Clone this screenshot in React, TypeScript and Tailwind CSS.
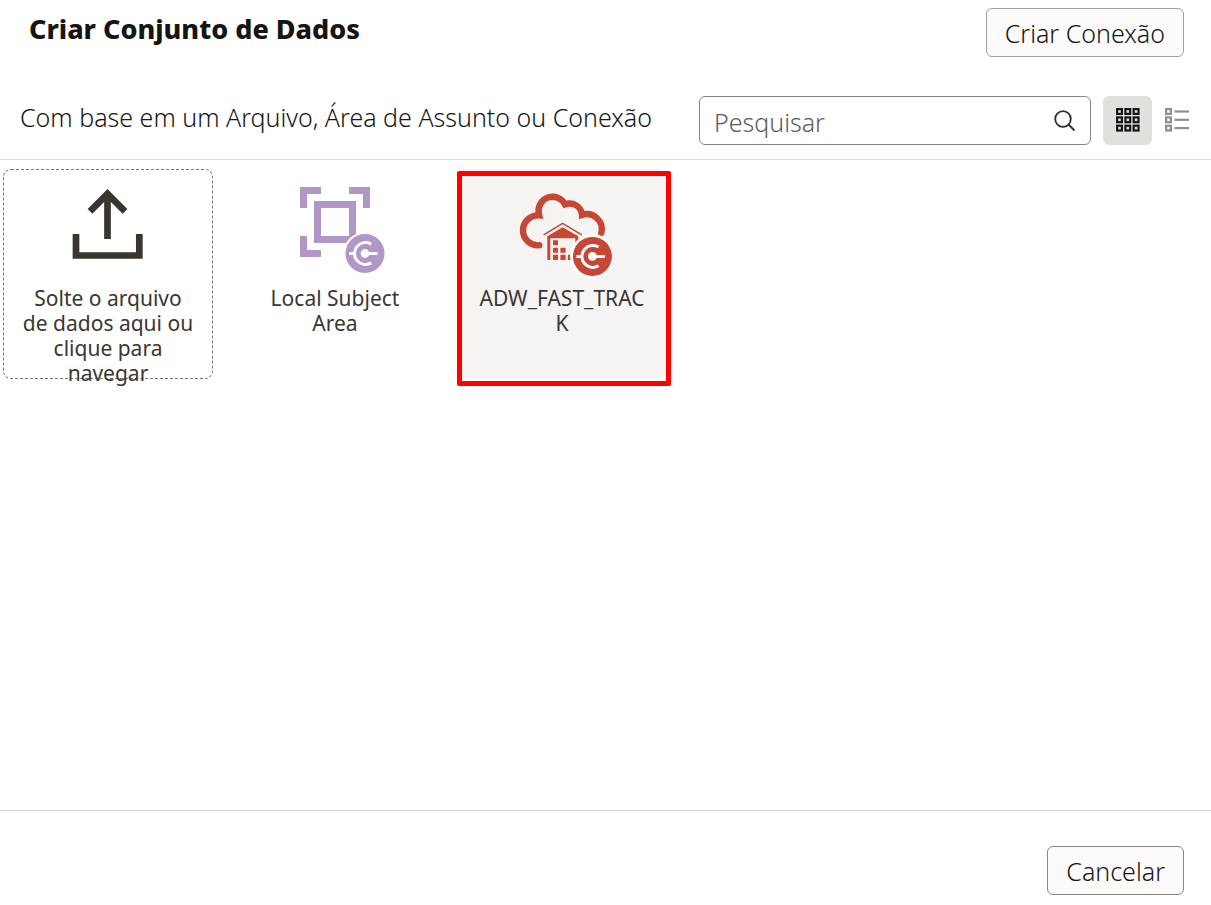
import type { ReactNode } from "react";

const cells = [0, 8.3, 16.6];

function UploadIcon() {
  return (
    <svg viewBox="0 0 100 100" className="size-[100px] shrink-0" aria-hidden="true">
      <g fill="none" stroke="#3a362f" strokeWidth="6.7">
        <path d="M32 32.3 49.5 14.8l17.5 17.5M49.5 14v46" />
        <path d="M18 55v21.5h63.3V55" />
      </g>
    </svg>
  );
}

function ConnectionBadge({ cx, cy, color, halo }: { cx: number; cy: number; color: string; halo: number }) {
  return (
    <g transform={`translate(${cx} ${cy})`}>
      <circle r={halo} fill="#fff" />
      <circle r="19.5" fill={color} />
      <circle r="4.4" fill="#fff" />
      <path d="M6.2 -9.4A11 11 0 1 0 6.2 9.4M0 0H12.5M-16 0H-11" fill="none" stroke="#fff" strokeWidth="3" />
    </g>
  );
}

function SubjectAreaIcon() {
  return (
    <svg viewBox="0 0 100 100" className="size-[100px] shrink-0" aria-hidden="true">
      <g fill="none" stroke="#b097c8" strokeWidth="7">
        <path d="M36 11.5H18.5V29M64 11.5H81.5V29M36 74.5H18.5V57" />
        <rect x="32.5" y="25.5" width="35" height="35" />
      </g>
      <ConnectionBadge cx={80} cy={74.5} color="#b097c8" halo={21.5} />
    </svg>
  );
}

function WarehouseIcon() {
  return (
    <svg viewBox="0 0 100 100" className="size-[100px] shrink-0" aria-hidden="true">
      <path
        d="M27.2 66.3A15 15 0 1 1 27.2 36.4L26.8 34.5A14 14 0 0 1 53 25.4A12.4 12.4 0 0 1 70 36A15 15 0 0 1 89.3 54"
        fill="none"
        stroke="#c74634"
        strokeWidth="6.4"
        strokeLinecap="round"
      />
      <path d="M31.7 55.8 50.6 44.4 69.8 55.8" fill="none" stroke="#c74634" strokeWidth="1.5" />
      <path d="M35.3 57.2 50.6 48.3 66.3 57.2V81H63.3V59.3H38.3V81H35.3Z" fill="#c74634" />
      <path
        d="M41 61.3h5v5h-5zM41 68.8h5v5h-5zM48.4 68.8h5.2v5h-5.2zM41 75.8h5V81h-5zM48.4 75.8h5.2V81h-5.2zM55.8 75.8H61V81h-5.2z"
        fill="#c74634"
      />
      <ConnectionBadge cx={80.4} cy={77.4} color="#c74634" halo={22.3} />
    </svg>
  );
}

function GridIcon() {
  return (
    <svg viewBox="-1 0 25 25" className="size-[25px]" fill="none" stroke="#161513" strokeWidth="2.2" aria-hidden="true">
      {cells.map((y) =>
        cells.map((x) => <rect key={`${x}-${y}`} x={x + 1.1} y={y + 1.1} width="4.8" height="4.8" />),
      )}
    </svg>
  );
}

function ListIcon() {
  return (
    <svg viewBox="-1 0 25 25" className="size-[25px]" fill="none" stroke="#8b8e92" strokeWidth="2.2" aria-hidden="true">
      {cells.map((y) => (
        <g key={y}>
          <rect x="1.1" y={y + 1.1} width="4.8" height="4.8" />
          <path d={`M9.5 ${y + 3.5}H24`} />
        </g>
      ))}
    </svg>
  );
}

function Tile({
  icon,
  label,
  className = "border-transparent",
  children,
}: {
  icon: ReactNode;
  label: string;
  className?: string;
  children?: ReactNode;
}) {
  return (
    <button
      type="button"
      className={`relative flex size-[210px] flex-col items-center justify-start rounded-lg border px-[17px] pt-[9px] text-[21px] leading-[25px] font-normal text-[#3a3632] ${className}`}
    >
      {icon}
      <span className="mt-[7px] w-full text-center wrap-anywhere">{label}</span>
      {children}
    </button>
  );
}

export default function App() {
  return (
    <div className="flex min-h-screen flex-col bg-white font-['Noto_Sans','Open_Sans',sans-serif] font-light text-[#161513]">
      <header className="flex items-start justify-between pt-2 pr-[27px] pl-[29px]">
        <h1 className="pt-[3px] text-[27px] leading-9 font-extrabold">Criar Conjunto de Dados</h1>
        <button type="button" className="h-[49px] rounded-md border border-[#a5a19d] bg-[#fcfbfa] px-[18px] pt-[3px] text-[25px]">
          Criar Conexão
        </button>
      </header>

      <div className="mt-[39px] flex items-start justify-between border-b border-[#dfdfdf] pr-[10px] pb-[14px] pl-5">
        <p className="pt-[3px] text-[25px] leading-9">Com base em um Arquivo, Área de Assunto ou Conexão</p>
        <div className="flex items-center">
          <label className="mr-3 flex h-[49px] w-[392px] items-center rounded-md border border-[#8b8580] bg-white px-[14px]">
            <input
              type="search"
              aria-label="Pesquisar"
              placeholder="Pesquisar"
              className="min-w-0 flex-1 pt-[5px] text-[25px] outline-none placeholder:text-[#5c5c5c]"
            />
            <svg viewBox="0 0 24 24" className="size-6" fill="none" stroke="#312d2a" strokeWidth="1.8" aria-hidden="true">
              <circle cx="11" cy="10" r="7.8" />
              <path d="m16.5 15.5 6 6" />
            </svg>
          </label>
          <button type="button" aria-label="Grade" aria-pressed="true" className="flex size-[49px] items-center justify-center rounded-md bg-[#e2e0dc]">
            <GridIcon />
          </button>
          <button type="button" aria-label="Lista" aria-pressed="false" className="flex size-[49px] items-center justify-center rounded-md">
            <ListIcon />
          </button>
        </div>
      </div>

      <main className="flex flex-1 flex-wrap content-start gap-[17px] px-[3px] pt-[9px]">
        <Tile
          icon={<UploadIcon />}
          label="Solte o arquivo de dados aqui ou clique para navegar"
          className="border-dashed border-[#7a7673]"
        />
        <Tile icon={<SubjectAreaIcon />} label="Local Subject Area" />
        <Tile icon={<WarehouseIcon />} label="ADW_FAST_TRACK" className="border-transparent bg-[#f5f4f2]">
          <span className="absolute top-px -left-px h-[215px] w-[214px] rounded-xs border-5 border-[#ff0000]" />
        </Tile>
      </main>

      <footer className="flex justify-end border-t border-[#d0d0d0] pt-[35px] pr-[27px] pb-[10px]">
        <button type="button" className="h-[49px] rounded-md border border-[#8b8580] bg-[#fcfbfa] px-[18px] pt-[3px] text-[25px]">
          Cancelar
        </button>
      </footer>
    </div>
  );
}
